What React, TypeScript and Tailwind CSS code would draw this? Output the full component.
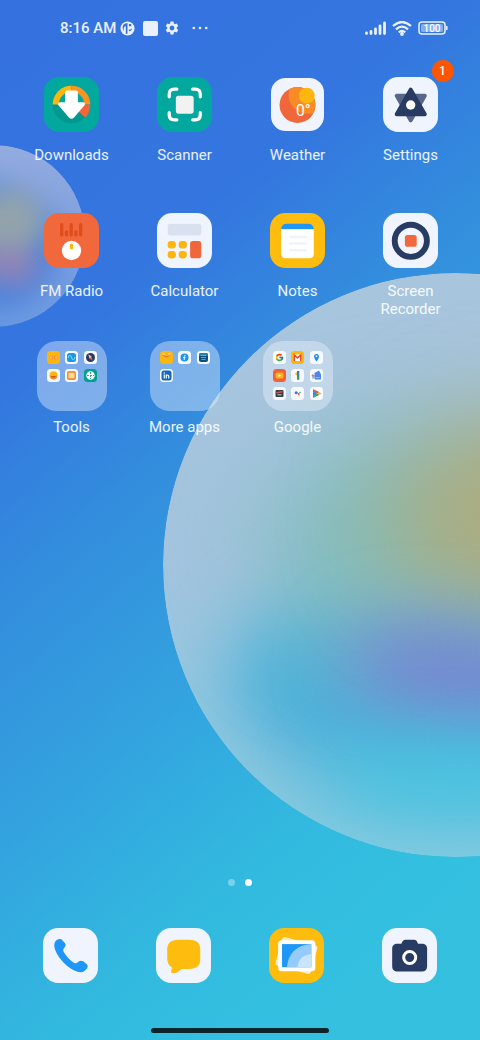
import type { ReactNode } from 'react'
import { MdSettings } from 'react-icons/md'
import { FcGoogle } from 'react-icons/fc'

type App = {
  name: string
  icon: ReactNode
  badge?: number
}

type TileProps = {
  fill: string
  children: ReactNode
}

// Rounded 54px app tile, everything inside is drawn on a 54x54 grid
function Tile({ fill, children }: TileProps) {
  return (
    <svg viewBox="0 0 54 54" className="size-[55px]" aria-hidden="true">
      <rect width="54" height="54" rx="15" fill={fill} />
      {children}
    </svg>
  )
}

function Mini({ fill = '#f6f9fe', children }: { fill?: string; children: ReactNode }) {
  return (
    <svg viewBox="0 0 26 26" className="size-[13px]" aria-hidden="true">
      <rect width="26" height="26" rx="7" fill={fill} />
      {children}
    </svg>
  )
}

function Folder({ children }: { children: ReactNode }) {
  return (
    <div className="grid size-[70px] grid-cols-[repeat(3,13px)] content-start justify-between gap-y-[5px] rounded-[20px] bg-[#f0f4ff]/40 p-2.5">
      {children}
    </div>
  )
}

function DownloadsIcon() {
  return (
    <Tile fill="#02a89e">
      <circle cx="27" cy="27" r="18.5" fill="#02978f" />
      <path d="M27 27H8.500A18.500 18.500 0 0 1 27 8.500Z" fill="#fdb60d" />
      <path d="M27 27V8.500A18.500 18.500 0 0 1 45.500 27Z" fill="#f99422" />
      <path d="M27 27H45.500Q45.500 35 40.500 40Z" fill="#f0653a" />
      <path d="M14.500 27A12.500 12.500 0 0 1 39.500 27Z" fill="#02a89e" />
      <path
        d="M22.500 15H31.500V26.500H38.500L28 38.800Q27 39.800 26 38.800L15.500 26.500H22.500Z"
        fill="#fff"
        stroke="#fff"
        strokeWidth="3.500"
        strokeLinejoin="round"
      />
    </Tile>
  )
}

function ScannerIcon() {
  return (
    <Tile fill="#02a89e">
      <rect x="18.500" y="18.500" width="17.500" height="17.500" rx="2.500" fill="#f1f3f3" />
      <path
        d="M12 19.500V17Q12 12 17 12H19.500M35 12H37.500Q42.500 12 42.500 17V19.500M42.500 35V37Q42.500 42 37.500 42H35M19.500 42H17Q12 42 12 37V35"
        fill="none"
        stroke="#fff"
        strokeWidth="3.200"
        strokeLinecap="round"
      />
    </Tile>
  )
}

function WeatherIcon() {
  return (
    <svg viewBox="0 0 54 54" className="size-[53px]" aria-hidden="true">
      <defs>
        <clipPath id="sun-disc">
          <circle cx="27" cy="27.500" r="18.300" />
        </clipPath>
      </defs>
      <rect width="54" height="54" rx="15" fill="#f0f4fe" />
      <circle cx="27" cy="27.500" r="18.300" fill="#f0673b" />
      <circle cx="37" cy="17.500" r="19" fill="#f98b24" clipPath="url(#sun-disc)" />
      <circle cx="36.500" cy="18" r="8" fill="#fdb60d" />
      <text x="25.500" y="39" fontSize="16" fill="#fff" fontFamily="Roboto, sans-serif">
        0°
      </text>
    </svg>
  )
}

function SettingsIcon() {
  return (
    <Tile fill="#f0f4fe">
      <path d="M13.500 18.500H41L27.200 42.500Z" fill="#566788" stroke="#566788" strokeWidth="4" strokeLinejoin="round" />
      <path d="M27.200 12.500 41 36.500H13.500Z" fill="#273b63" stroke="#273b63" strokeWidth="4" strokeLinejoin="round" />
      <circle cx="27.200" cy="27.500" r="4.600" fill="#fff" />
    </Tile>
  )
}

function RadioIcon() {
  return (
    <Tile fill="#f1683c">
      <path
        d="M17.400 11.500V21.500M22.100 18.500V21.500M26.700 11.500V21.500M31.300 18.500V21.500M36 11.500V21.500"
        stroke="#e04c1c"
        strokeWidth="3.200"
        strokeLinecap="round"
      />
      <circle cx="27" cy="36.800" r="9.500" fill="#fff" />
      <rect x="25.400" y="30" width="3.200" height="5.500" rx="1.500" fill="#fdb60d" />
    </Tile>
  )
}

function CalculatorIcon() {
  return (
    <Tile fill="#f0f4fe">
      <rect x="10.500" y="10.500" width="33" height="11.500" rx="2.500" fill="#d9e1f0" />
      <rect x="10.500" y="27.500" width="8" height="7.300" rx="3" fill="#fdb60d" />
      <rect x="21.300" y="27.500" width="8" height="7.300" rx="3" fill="#fdb60d" />
      <rect x="10.500" y="37.300" width="8" height="7.300" rx="3" fill="#fdb60d" />
      <rect x="21.300" y="37.300" width="8" height="7.300" rx="3" fill="#fdb60d" />
      <rect x="32.500" y="27.500" width="11" height="17" rx="2.800" fill="#f0673b" />
    </Tile>
  )
}

function NotesIcon() {
  return (
    <Tile fill="#fdbc0e">
      <path d="M11 16Q11 10.500 17 10.500H37Q43 10.500 43 16Z" fill="#1e97f8" />
      <path d="M11 16H43V40Q43 44.500 38.500 44.500H15.500Q11 44.500 11 40Z" fill="#fff" />
      <path d="M20 23.500H35M20 30H35M20 36.500H35" stroke="#f0f3fc" strokeWidth="2.500" strokeLinecap="round" />
    </Tile>
  )
}

function RecorderIcon() {
  return (
    <Tile fill="#f0f4fe">
      <circle cx="27.300" cy="27.300" r="15.800" fill="none" stroke="#273b63" strokeWidth="5.800" />
      <rect x="21.500" y="21.500" width="11.600" height="11.600" rx="2.500" fill="#f1683c" />
    </Tile>
  )
}

function ToolsFolder() {
  return (
    <Folder>
      <Mini fill="#fdb60d">
        <circle cx="8.500" cy="13" r="4" fill="#f99422" />
        <circle cx="17.500" cy="13" r="4" fill="#f99422" />
        <path d="M8 11v4M18 11v4" stroke="#ffe6b0" strokeWidth="2" />
      </Mini>
      <Mini>
        <rect x="4" y="4" width="18" height="18" rx="5" fill="#149be8" />
        <path d="M6.500 14V12q0-3 3-3t3.500 4 3.500 4 3-3V12" fill="none" stroke="#a9e4fa" strokeWidth="1.500" />
      </Mini>
      <Mini>
        <circle cx="13" cy="13" r="9" fill="#273b63" />
        <path d="m9 7 6 4 2 8-6-4Z" fill="#f0673b" />
        <path d="m9 7 6 4-4 4Z" fill="#e9c9bf" />
      </Mini>
      <Mini>
        <circle cx="13" cy="12.500" r="8" fill="#fdb60d" />
        <path d="M6 14h14q-1 7-7 7t-7-7Z" fill="#f98b24" />
        <path d="M8 14h10q-1 3.500-5 3.500T8 14Z" fill="#e04c1c" />
      </Mini>
      <Mini>
        <rect x="4" y="4" width="18" height="18" rx="4" fill="#f98b24" />
        <rect x="7" y="7.500" width="12" height="11" rx="1.500" fill="#ffd99c" />
      </Mini>
      <Mini fill="#02a08f">
        <circle cx="13" cy="13" r="8.500" fill="#fff" />
        <path d="M13 6v14M6 13h14" stroke="#02a08f" strokeWidth="1.800" strokeDasharray="4 2" />
      </Mini>
    </Folder>
  )
}

function MoreAppsFolder() {
  return (
    <Folder>
      <Mini fill="#fdb60d">
        <path d="M5 6h4M17 6h4" stroke="#e9eef8" strokeWidth="2.500" />
        <path d="M6 8q7 8 14 0" fill="none" stroke="#f0673b" strokeWidth="2" strokeLinecap="round" />
      </Mini>
      <Mini>
        <circle cx="13" cy="13" r="8" fill="#1e93f5" />
        <path d="M15 9q-2.500-1-2.500 2v7M10.500 13h4.500" fill="none" stroke="#fff" strokeWidth="2" />
      </Mini>
      <Mini>
        <rect x="4" y="4" width="18" height="18" rx="4" fill="#0f4f80" />
        <path d="M4 8q0-4 4-4h10q4 0 4 4v2H4Z" fill="#1c86ad" />
        <path d="M8 9h10M8 13h10M9 17h8" stroke="#5fb4d4" strokeWidth="1.800" />
      </Mini>
      <Mini>
        <rect x="3" y="3" width="20" height="20" rx="5" fill="#1565bb" />
        <path d="M8.500 11v8M12.500 19v-8M12.500 15q0-3 2.500-3t2.500 3v4" fill="none" stroke="#fff" strokeWidth="2.400" />
        <circle cx="8.500" cy="8" r="1.500" fill="#fff" />
      </Mini>
    </Folder>
  )
}

function GoogleFolder() {
  return (
    <Folder>
      <Mini>
        <FcGoogle x="4" y="4" size={18} />
      </Mini>
      <Mini fill="#fdb60d">
        <path d="M5 7h16v13H5Z" fill="#fff" />
        <path d="M6.500 20V8L13 14l6.500-6v12" fill="none" stroke="#e5482f" strokeWidth="3" />
      </Mini>
      <Mini>
        <path d="M13 21Q8 14 8 11a5 5 0 0 1 10 0q0 3-5 10Z" fill="#1e88ee" />
        <circle cx="13" cy="10.500" r="2" fill="#fff" />
      </Mini>
      <Mini fill="#f1603a">
        <rect x="5" y="7" width="16" height="12" rx="3.500" fill="#fdb60d" />
        <path d="m11 10 5 3-5 3Z" fill="#fff" />
      </Mini>
      <Mini>
        <path d="M8 9.500 14 4v6L10.500 13Z" fill="#fbb616" />
        <path d="M12 4H16.500v9H12Z" fill="#3b78e7" />
        <path d="M12 12H16.500v9.500H12Z" fill="#2e9e4f" />
      </Mini>
      <Mini>
        <path d="m9 8 9-5 4 8v10H10Z" fill="#4a86ee" />
        <path d="M3 12h7v7H5Z" fill="#8aaee8" />
        <path d="M4 12h3" stroke="#e5482f" strokeWidth="2" />
        <path d="M11 17h9" stroke="#8db4f6" strokeWidth="2" />
      </Mini>
      <Mini>
        <rect x="5" y="6" width="16" height="14" rx="2" fill="#3a3d46" />
        <path d="m7 10 12-2v3L7 13Z" fill="#c9566a" />
        <path d="M9 14h8v3H9Z" fill="#8cae6b" />
      </Mini>
      <Mini>
        <circle cx="10.500" cy="11.500" r="3.200" fill="#3b78e7" />
        <circle cx="18" cy="11" r="1.300" fill="#2e9e4f" />
        <circle cx="15.500" cy="14" r="1.800" fill="#e5482f" />
        <circle cx="16" cy="17.500" r="1.500" fill="#fbb616" />
      </Mini>
      <Mini>
        <path d="m6 4 8 9-8 9Z" fill="#2f8df2" />
        <path d="m6 4 12 6-4 3Z" fill="#e5482f" />
        <path d="m18 10 5 3-5 3-4-3Z" fill="#fbb616" />
        <path d="m6 22 12-6-4-3Z" fill="#2e9e4f" />
      </Mini>
    </Folder>
  )
}

function PhoneIcon() {
  return (
    <Tile fill="#f0f4fe">
      <path
        d="M11.500 14.500C12.500 11.500 15.500 10.300 18 11L21.500 14.800C22.500 16 22.300 17.500 21.500 18.700L20 20.500C19.500 22 20 23 21 24.500C23.500 28.500 26.500 31.500 30.300 34C31.500 34.800 32.500 35 33.500 34L35 32.800C36 32 38 32 39.500 32.700L43 35.500C44.300 36.800 44 38.500 43.200 39.800L40.500 42.500C38.500 43.900 35.500 43.700 32.500 42.500C24 39 15.500 30.500 12 21.500C11 19 10.800 16.500 11.500 14.500Z"
        fill="#1e97f8"
      />
    </Tile>
  )
}

function MessagesIcon() {
  return (
    <Tile fill="#f0f4fe">
      <path
        d="M22 11.500H32.500C40.500 11.500 43.500 15 43.500 21.500V30C43.500 37 40 40.300 32.500 40.300H26C24.500 40.300 24 41.300 22.500 42.500C20 44.300 17.500 44.800 15.500 44C14 43.300 15.800 41 15.500 38.500C12.500 37 11 34 11 30V21.500C11 15 14.500 11.500 22 11.500Z"
        fill="#fdbc0e"
      />
    </Tile>
  )
}

function GalleryIcon() {
  return (
    <Tile fill="#fdbc0e">
      <rect x="9" y="12.500" width="36" height="29" rx="3" fill="#fff" fillOpacity=".75" transform="rotate(15 27 27)" />
      <rect x="9" y="12" width="36.500" height="30.500" rx="3.500" fill="#fff" />
      <path d="M12.800 15.800H41.500V38.500H12.800Z" fill="#1e97f8" />
      <path d="M41.500 15.800V38.500H17.500Q20 17.500 41.500 15.800Z" fill="#94cbfb" />
      <path d="M41.500 25.500V38.500H28Q29 27 41.500 25.500Z" fill="#c9e4fd" />
    </Tile>
  )
}

function CameraIcon() {
  return (
    <Tile fill="#f0f4fe">
      <path
        d="M15 15.500H18.500C20 15.500 19.500 11.500 23 11.500H31.500C35 11.500 34.500 15.500 36 15.500H39C42.500 15.500 44.300 17 44.300 20.500V37.500C44.300 41 42.500 42.700 39 42.700H15.500C12 42.700 10 41 10 37.500V20.500C10 17 12 15.500 15 15.500Z"
        fill="#273b63"
      />
      <circle cx="27.200" cy="29" r="5.900" fill="none" stroke="#fff" strokeWidth="3" />
    </Tile>
  )
}

const apps: App[] = [
  { name: 'Downloads', icon: <DownloadsIcon /> },
  { name: 'Scanner', icon: <ScannerIcon /> },
  { name: 'Weather', icon: <WeatherIcon /> },
  { name: 'Settings', icon: <SettingsIcon />, badge: 1 },
  { name: 'FM Radio', icon: <RadioIcon /> },
  { name: 'Calculator', icon: <CalculatorIcon /> },
  { name: 'Notes', icon: <NotesIcon /> },
  { name: 'Screen Recorder', icon: <RecorderIcon /> },
  { name: 'Tools', icon: <ToolsFolder /> },
  { name: 'More apps', icon: <MoreAppsFolder /> },
  { name: 'Google', icon: <GoogleFolder /> },
]

const dock: App[] = [
  { name: 'Phone', icon: <PhoneIcon /> },
  { name: 'Messages', icon: <MessagesIcon /> },
  { name: 'Gallery', icon: <GalleryIcon /> },
  { name: 'Camera', icon: <CameraIcon /> },
]

function Wallpaper() {
  return (
    <svg
      viewBox="0 0 480 1040"
      preserveAspectRatio="xMidYMid slice"
      className="absolute inset-0 -z-10 size-full"
      aria-hidden="true"
    >
      <defs>
        <linearGradient id="sky" gradientUnits="userSpaceOnUse" x1="0" y1="0" x2="680" y2="800">
          <stop offset="0" stopColor="#3571df" />
          <stop offset=".28" stopColor="#3476df" />
          <stop offset=".44" stopColor="#338edd" />
          <stop offset=".61" stopColor="#33a2df" />
          <stop offset=".77" stopColor="#32b8df" />
          <stop offset=".88" stopColor="#33bfdf" />
          <stop offset="1" stopColor="#35c0df" />
        </linearGradient>
        <linearGradient id="glass" x1="0" y1="0" x2="0" y2="1">
          <stop offset="0" stopColor="#a8c5dd" />
          <stop offset=".5" stopColor="#a3c4df" />
          <stop offset="1" stopColor="#84cbe0" />
        </linearGradient>
        <linearGradient id="glass-small" x1="0" y1="0" x2="0" y2="1">
          <stop offset="0" stopColor="#94acdf" />
          <stop offset=".5" stopColor="#7fa0df" />
          <stop offset="1" stopColor="#6b9ae2" />
        </linearGradient>
        <clipPath id="ball">
          <circle cx="455" cy="565" r="292" />
        </clipPath>
        <clipPath id="ball-small">
          <circle cx="-6" cy="236" r="91" />
        </clipPath>
        <filter id="soft" x="-80%" y="-120%" width="260%" height="340%" colorInterpolationFilters="sRGB">
          <feGaussianBlur stdDeviation="34" />
        </filter>
        <filter id="softer" x="-80%" y="-120%" width="260%" height="340%" colorInterpolationFilters="sRGB">
          <feGaussianBlur stdDeviation="50" />
        </filter>
        <filter id="soft-small" x="-50%" y="-50%" width="200%" height="200%" colorInterpolationFilters="sRGB">
          <feGaussianBlur stdDeviation="12" />
        </filter>
      </defs>
      <rect width="480" height="1040" fill="url(#sky)" />
      <g clipPath="url(#ball-small)">
        <circle cx="-6" cy="236" r="91" fill="url(#glass-small)" />
        <g filter="url(#soft-small)">
          <circle cx="-4" cy="246" r="64" fill="#4a82dc" />
          <ellipse cx="8" cy="222" rx="38" ry="34" fill="#92a3ac" />
          <ellipse cx="10" cy="266" rx="30" ry="20" fill="#8d84b8" />
        </g>
      </g>
      <g clipPath="url(#ball)">
        <circle cx="455" cy="565" r="292" fill="url(#glass)" />
        <ellipse cx="460" cy="680" rx="230" ry="118" fill="#4bb1da" filter="url(#soft)" />
        <ellipse cx="430" cy="545" rx="165" ry="120" fill="#82bdbd" filter="url(#softer)" />
        <ellipse cx="550" cy="515" rx="165" ry="105" fill="#b2aa76" fillOpacity=".9" filter="url(#softer)" />
        <ellipse
          cx="455"
          cy="672"
          rx="112"
          ry="48"
          fill="#7688d2"
          filter="url(#soft)"
          transform="rotate(8 455 672)"
        />
        <ellipse cx="460" cy="782" rx="140" ry="34" fill="#46c6e1" filter="url(#soft)" />
      </g>
    </svg>
  )
}

function StatusBar() {
  return (
    <header className="flex h-14 items-center justify-between pr-8 pl-[60px] text-white/90">
      <div className="flex items-center">
        <time className="text-[15px] font-medium">8:16 AM</time>
        <svg viewBox="0 0 16 16" className="ml-1 size-[15px]" aria-hidden="true">
          <circle cx="8" cy="8" r="7.500" fill="currentColor" />
          <path d="M3.500 4Q5.500 2.200 8 2.200V13.500H6.200V5.500Q4 5.500 4 8V11Q2 7 3.500 4Z" fill="#3673de" />
          <path d="M9.500 3.200h2.500v2.500H9.500ZM9.500 9Q12 9.500 13 7.500Q12.500 11 9.500 11Z" fill="#3673de" />
        </svg>
        <span className="ml-2 size-[15px] rounded-xs bg-current" />
        <MdSettings className="ml-[6px] size-4" />
        <svg viewBox="0 0 16 4" className="ml-3 h-1 w-4" aria-hidden="true">
          <circle cx="1.800" cy="2" r="1.300" fill="currentColor" />
          <circle cx="8" cy="2" r="1.300" fill="currentColor" />
          <circle cx="14.200" cy="2" r="1.300" fill="currentColor" />
        </svg>
      </div>
      <div className="flex items-center gap-[6px]">
        <svg viewBox="0 0 21 14" className="h-3.5 w-[21px]" aria-hidden="true">
          <path
            d="M1.500 12.500V12M6 12.500V10.500M10.500 12.500V8M15 12.500V5M19.500 12.500V2"
            stroke="currentColor"
            strokeWidth="2.800"
            strokeLinecap="round"
          />
        </svg>
        <svg viewBox="0 0 20 15" className="h-[15px] w-5" aria-hidden="true">
          <path
            d="M1 5Q10-3 19 5M4 8.300Q10 3 16 8.300M6.800 11.300Q10 8.500 13.200 11.300"
            fill="none"
            stroke="currentColor"
            strokeWidth="2.300"
          />
          <circle cx="10" cy="13" r="1.900" fill="currentColor" />
        </svg>
        <svg viewBox="0 0 30 14" className="h-3.5 w-[30px]" aria-hidden="true">
          <rect x="1" y="1" width="26" height="12" rx="3" fill="none" stroke="currentColor" strokeWidth="1.500" />
          <rect x="3" y="3" width="22" height="8" rx="1.500" fill="#fff" fillOpacity=".4" />
          <path d="M28.800 5V9" stroke="currentColor" strokeWidth="1.500" />
          <text
            x="14"
            y="10.500"
            textAnchor="middle"
            fontSize="10"
            fontWeight="500"
            fill="#fff"
            fontFamily="Roboto, sans-serif"
          >
            100
          </text>
        </svg>
      </div>
    </header>
  )
}

function AppButton({ name, icon, badge }: App) {
  return (
    <button type="button" className="flex h-[136px] flex-col items-center text-white">
      <span className="relative flex size-[70px] items-center justify-center">
        {icon}
        {badge && (
          <span className="absolute -top-[9px] -right-2 flex size-[22px] items-center justify-center rounded-full bg-[#fe5501] text-xs font-medium">
            {badge}
          </span>
        )}
      </span>
      <span className="mt-[7px] max-w-20 text-[15px] leading-[18px] text-white/90">{name}</span>
    </button>
  )
}

export default function App() {
  return (
    <div className="relative isolate flex min-h-screen flex-col overflow-hidden font-[Roboto,sans-serif]">
      <Wallpaper />
      <StatusBar />

      <main className="grid grid-cols-4 pt-[13px] pr-[13px] pl-[15px]">
        {apps.map((app) => (
          <AppButton key={app.name} {...app} />
        ))}
      </main>

      <footer className="mt-auto flex flex-col items-center">
        {/* Page indicator */}
        <div className="flex gap-[10px]">
          <span className="size-[7px] rounded-full bg-white/35" />
          <span className="size-[7px] rounded-full bg-white" />
        </div>

        <nav className="mt-[42px] grid w-full grid-cols-4 px-3.5">
          {dock.map((app) => (
            <button key={app.name} type="button" aria-label={app.name} className="flex justify-center">
              {app.icon}
            </button>
          ))}
        </nav>

        {/* Gesture bar */}
        <div className="mt-[45px] mb-[7px] h-[5px] w-[37%] rounded-full bg-[#0b252c]" />
      </footer>
    </div>
  )
}
